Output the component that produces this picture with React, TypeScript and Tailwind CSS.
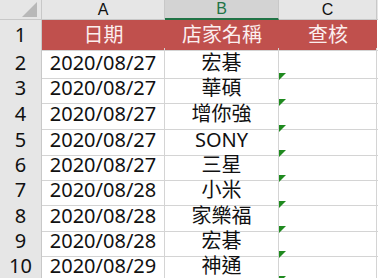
const rows = [
  { date: "2020/08/27", shop: "宏碁", flag: false },
  { date: "2020/08/27", shop: "華碩", flag: true },
  { date: "2020/08/27", shop: "增你強", flag: true },
  { date: "2020/08/27", shop: "SONY", flag: true },
  { date: "2020/08/27", shop: "三星", flag: true },
  { date: "2020/08/28", shop: "小米", flag: true },
  { date: "2020/08/28", shop: "家樂福", flag: true },
  { date: "2020/08/28", shop: "宏碁", flag: true },
  { date: "2020/08/29", shop: "神通", flag: true },
];

const heights = ["h-[25px]", "h-[26px]", "h-[26px]", "h-[25px]", "h-[25px]", "h-[26px]", "h-[25px]", "h-[25px]", "h-[25px]"];

const cols = "grid grid-cols-[42px_123px_114px_98px_1fr]";

const Flag = () => (
  <svg width="7" height="7" viewBox="0 0 7 7" className="absolute left-0 top-0">
    <polygon points="0,0 7,0 0,7" fill="#1f8a1f" />
  </svg>
);

export default function App() {
  return (
    <div
      className="w-[378px] h-[278px] overflow-hidden bg-white text-[20px] text-[#111]"
      style={{ fontFamily: '"Noto Sans", "Noto Sans CJK TC", sans-serif' }}
    >
      {/* column headers */}
      <div
        className={`${cols} h-[20px] text-[16px] leading-none`}
        style={{ fontFamily: '"Liberation Sans", sans-serif' }}
      >
        <div className="relative bg-[#e6e6e6] border-r border-b border-[#c8c8c8]">
          <svg width="18" height="16" viewBox="0 0 18 16" className="absolute left-[20px] top-[2px]">
            <polygon points="17,0 17,15 2,15" fill="#b8b8b8" />
          </svg>
        </div>
        <div className="flex items-center justify-center bg-[#e6e6e6] border-r border-b border-[#c8c8c8]">A</div>
        <div className="flex items-center justify-center bg-[#d3d3d3] border-r border-[#c8c8c8] border-b-2 border-b-[#217346] text-[#217346]">B</div>
        <div className="flex items-center justify-center bg-[#e6e6e6] border-r border-b border-[#c8c8c8]">C</div>
        <div className="bg-[#e6e6e6] border-b border-[#c8c8c8]" />
      </div>

      {/* title row */}
      <div className={`${cols} h-[28px]`}>
        <div className="flex items-center justify-center bg-[#e6e6e6] border-r border-b border-[#c8c8c8]">1</div>
        <div className="flex items-center justify-center bg-[#c0504d] text-[#fbeeee] border-b border-[#d4d4d4]">日期</div>
        <div className="flex items-center justify-center bg-[#c0504d] text-[#fbeeee] border-b border-[#d4d4d4]">店家名稱</div>
        <div className="flex items-center justify-center bg-[#c0504d] text-[#fbeeee] border-b border-[#d4d4d4]">查核</div>
        <div className="border-b border-[#d4d4d4]" />
      </div>

      {rows.map((r, i) => (
        <div key={i} className={`${cols} ${heights[i]}`}>
          <div className="flex items-center justify-center bg-[#e6e6e6] border-r border-b border-[#c8c8c8]">{i + 2}</div>
          <div className="flex items-center justify-center border-r border-b border-[#d4d4d4]">{r.date}</div>
          <div className="flex items-center justify-center border-r border-b border-[#d4d4d4]">{r.shop}</div>
          <div className="relative border-r border-b border-[#d4d4d4]">{r.flag && <Flag />}</div>
          <div className="border-b border-[#d4d4d4]" />
        </div>
      ))}

      <div className={`${cols} h-[25px]`}>
        <div className="bg-[#e6e6e6] border-r border-[#c8c8c8]" />
        <div className="border-r border-[#d4d4d4]" />
        <div className="border-r border-[#d4d4d4]" />
        <div className="relative border-r border-[#d4d4d4]"><Flag /></div>
        <div />
      </div>
    </div>
  );
}
